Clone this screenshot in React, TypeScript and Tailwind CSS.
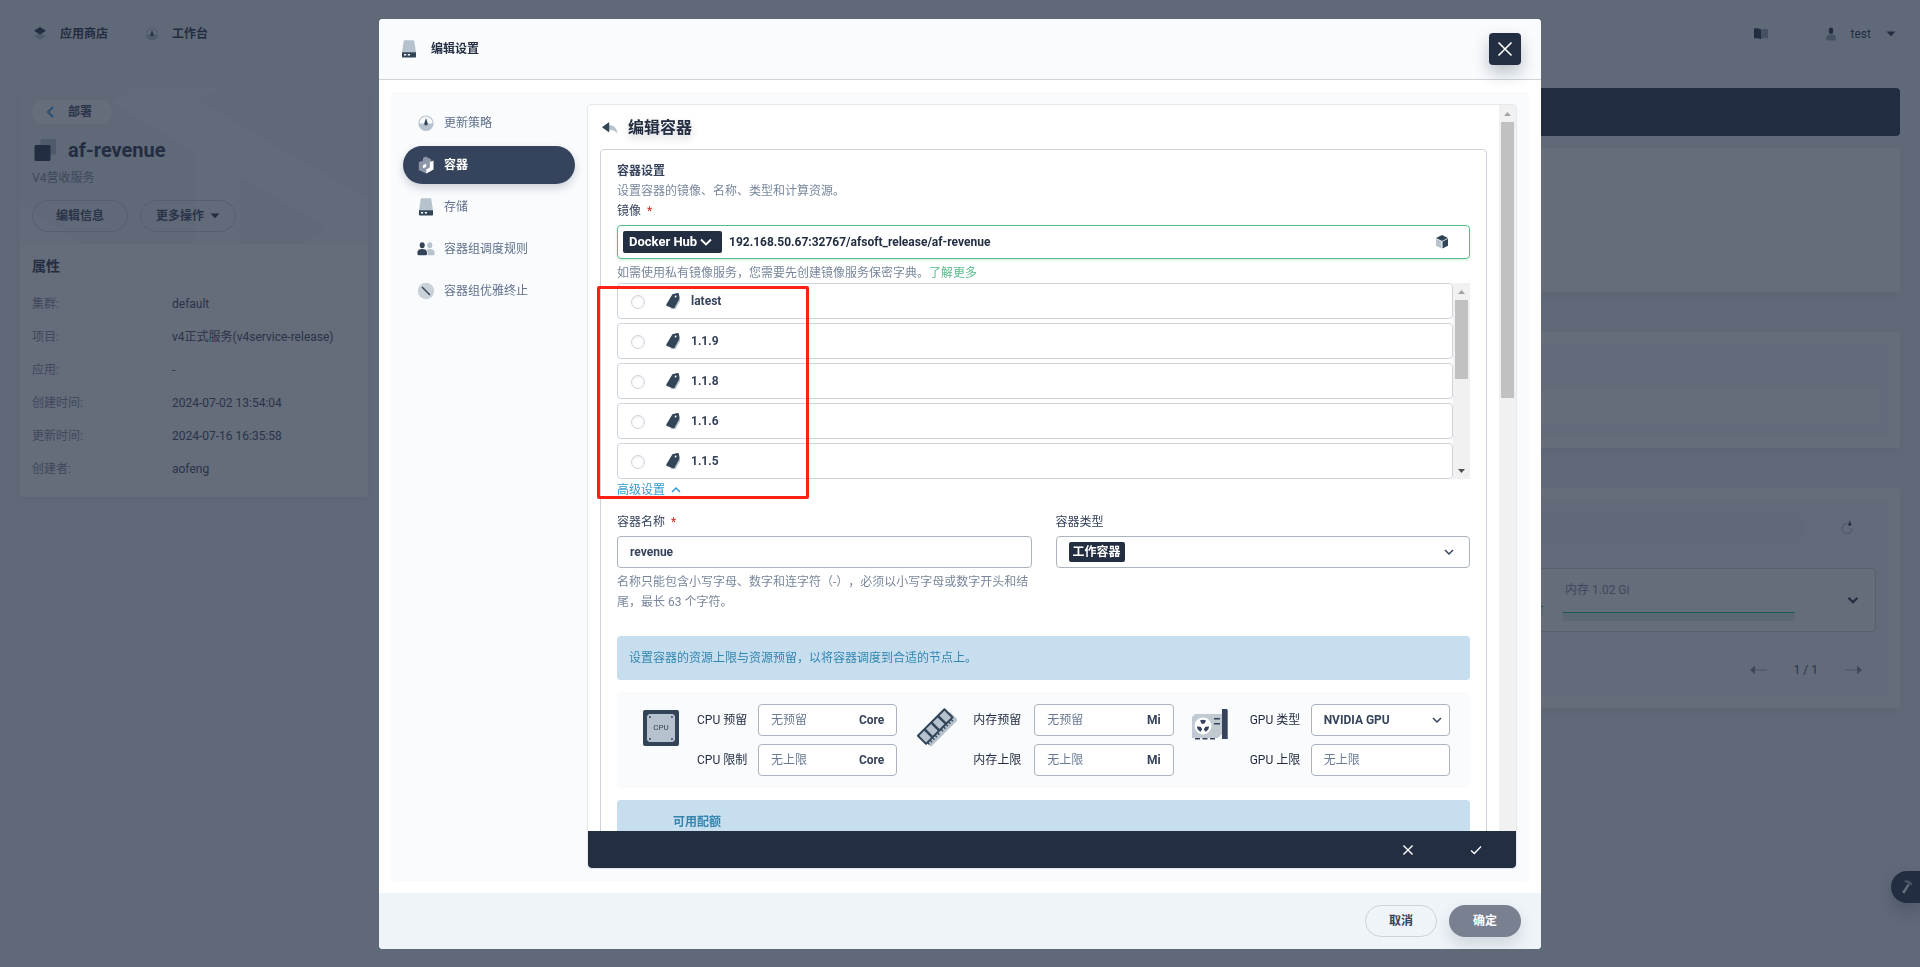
import React from 'react';

const DARK = '#324558';
const LIGHT = '#b6c2cd';

type IconProps = { size?: number; dark?: string; light?: string };

function StorageIcon({ size = 20, dark = DARK, light = LIGHT }: IconProps) {
  return (
    <svg width={size} height={size} viewBox="0 0 20 20" fill="none">
      <path d="M5.600 1.200h8.800c.5 0 .8.3.9.8L17 13.400H3L4.700 2c.1-.5.4-.8.9-.8z" fill={light} />
      <path d="M3 13.200h14v4.600c0 .5-.3.8-.8.8H3.800c-.5 0-.8-.3-.8-.8z" fill={dark} />
      <path d="M5 15h2.200v1.400H5zM8.800 15H11v1.400H8.800z" fill="#fff" />
    </svg>
  );
}

function GaugeIcon({ size = 20, dark = DARK, light = LIGHT }: IconProps) {
  return (
    <svg width={size} height={size} viewBox="0 0 20 20" fill="none">
      <circle cx="10" cy="10" r="7" stroke={light} strokeWidth="1.200" />
      <path d="M2.500 10.500h15a7.500 7.500 0 0 1-15 0z" fill={light} />
      <path d="M10 5l1.700 5.200a1.800 1.800 0 1 1-3.400 0z" fill={dark} />
    </svg>
  );
}

function ContainerIcon({ size = 20 }: IconProps) {
  return (
    <svg width={size} height={size} viewBox="0 0 20 20" fill="none">
      <path d="M9.500 1.500L15 4.200v1.500l2 .8v8l-6.800 4L2.800 15V7.200L7 5.400V3z" fill="#8b95a7" />
      <path d="M13.800 7.200l3.700-1.800v9.200l-7.200 4v-4.200l3.500-1.800z" fill="#fff" />
      <path d="M7 10.200l3.200-1.600v3.300L7 13.300z" fill="#fff" />
    </svg>
  );
}

function GroupIcon({ size = 20, dark = DARK, light = LIGHT }: IconProps) {
  return (
    <svg width={size} height={size} viewBox="0 0 20 20" fill="none">
      <ellipse cx="13.800" cy="6.200" rx="2.500" ry="3" fill={light} />
      <path d="M11.500 16.200v-2.800c0-1.500-.4-2.300-1-2.700.9-.5 2-.7 3.300-.7 2.800 0 4.800 1.100 4.800 3.600v1.500c0 .8-.5 1.100-1.200 1.100z" fill={light} />
      <ellipse cx="6.200" cy="6.200" rx="2.500" ry="3" fill={dark} />
      <path d="M1.400 15.100v-1.500C1.400 11.100 3.400 10 6.200 10s4.800 1.100 4.800 3.600v1.500c0 .8-.5 1.100-1.200 1.100H2.600c-.7 0-1.200-.3-1.200-1.100z" fill={dark} />
    </svg>
  );
}

function StopIcon({ size = 20, dark = DARK }: IconProps) {
  return (
    <svg width={size} height={size} viewBox="0 0 20 20" fill="none">
      <circle cx="10" cy="10" r="8.200" fill="#c9d1d9" />
      <path d="M6 6l8 8" stroke={dark} strokeWidth="1.500" />
    </svg>
  );
}

function TagIcon() {
  return (
    <svg width="20" height="20" viewBox="0 0 20 20" fill="none">
      <path d="M11 3l5.600 1.400.4 5.600-4.700 8.200-5-.4z" fill={LIGHT} />
      <path d="M9.400 3.200L14.200 2c1-.2 1.600.2 1.700 1l.5 4.700-4.700 8.800c-.4.800-1 1-1.800.7L4 15c-.8-.4-1-1-.6-1.800z" fill={DARK} />
      <circle cx="12.600" cy="5.400" r="1" fill="#fff" />
    </svg>
  );
}

function CubeIcon() {
  return (
    <svg width="16" height="16" viewBox="0 0 16 16" fill="none">
      <path d="M8 1l6 3-6 3-6-3z" fill={DARK} />
      <path d="M2 4.700l5.500 2.900v7L2 11.800z" fill={LIGHT} />
      <path d="M14 4.700L8.500 7.600v7L14 11.800z" fill={DARK} />
    </svg>
  );
}

function BackIcon() {
  return (
    <svg width="20" height="20" viewBox="0 0 20 20" fill="none">
      <path d="M9 7c4.800.2 8 2.800 8.400 8.600C15.600 12.800 13 11.800 9 11.900z" fill={LIGHT} />
      <path d="M2 9.300l7.200-5.300v10.600z" fill={DARK} />
    </svg>
  );
}

function Chevron({ dir = 'down', size = 16, color = 'currentColor', width = 1.5 }: { dir?: 'down' | 'up' | 'left'; size?: number; color?: string; width?: number }) {
  const paths = { down: 'M4 6l4 4 4-4', up: 'M4 10l4-4 4 4', left: 'M11 3L6 8l5 5' };
  return (
    <svg width={size} height={size} viewBox="0 0 16 16" fill="none" className="pointer-events-none shrink-0">
      <path d={paths[dir]} stroke={color} strokeWidth={width} />
    </svg>
  );
}

function Caret() {
  return (
    <svg width="10" height="6" viewBox="0 0 10 6">
      <path d="M.5.5h9L5 5.200z" fill="#242e42" />
    </svg>
  );
}

function CrossIcon({ size = 20, width = 2 }: { size?: number; width?: number }) {
  return (
    <svg width={size} height={size} viewBox="0 0 20 20" fill="none">
      <path d="M3.500 3.500l13 13M16.500 3.500l-13 13" stroke="#fff" strokeWidth={width} />
    </svg>
  );
}

function CpuIcon() {
  return (
    <svg width="40" height="40" viewBox="0 0 40 40" fill="none" className="ml-1">
      <rect x="2" y="2" width="36" height="36" rx="2" fill={DARK} />
      <path d="M8 6h24l2 2v24l-2 2H8l-2-2V8z" fill={LIGHT} />
      <circle cx="9" cy="9" r="1" fill={DARK} />
      <circle cx="31" cy="9" r="1" fill={DARK} />
      <circle cx="9" cy="31" r="1" fill={DARK} />
      <circle cx="31" cy="31" r="1" fill={DARK} />
      <text x="20" y="22" fontSize="8" fill={DARK} textAnchor="middle" fontFamily="Roboto, sans-serif">CPU</text>
    </svg>
  );
}

function MemoryIcon() {
  return (
    <svg width="40" height="40" viewBox="0 0 40 40" fill="none" className="ml-1">
      <g transform="rotate(-45 20 20)">
        <path d="M2.500 18h38v11h-38z" fill={LIGHT} />
        <rect x="0" y="11" width="39.500" height="13.500" rx="1" fill={DARK} />
        <path d="M2 13h7v9.500H2zM11.500 13h7v9.500h-7zM21 13h7v9.500h-7zM30.500 13h7v9.500h-7z" fill={LIGHT} />
        <path d="M3 24v2.500M6.500 24v2.500M10 24v2.500M13.500 24v2.500M17 24v2.500M22 24v2.500M25.500 24v2.500M29 24v2.500M32.500 24v2.500M36 24v2.500" stroke={DARK} strokeWidth="1.400" />
      </g>
    </svg>
  );
}

function GpuIcon() {
  return (
    <svg width="40" height="40" viewBox="0 0 40 40" fill="none">
      <path d="M5 6h27v20l-4 4H2V9z" fill="#c1c9d1" />
      <path d="M32 1h4c1 0 1.700.7 1.700 1.700V31H32z" fill="#36435c" />
      <circle cx="13" cy="18" r="8.500" fill="#fff" />
      <g fill="#36435c">
        <path d="M10 12.600c1.800-1.200 4.200-1.200 6 0l-1.600 3.200h-2.800z" />
        <path d="M7 18.500l3.700.2 1.500 2.500-1.600 2.600C8.300 22.700 7 20.800 7 18.500z" />
        <path d="M19 18.500l-3.700.2-1.500 2.500 1.600 2.600c2.300-1.100 3.600-3 3.600-5.300z" />
        <path d="M24 10h6v1.600h-6zM24 15h6v1.600h-6zM5 30h5v1.500H5zM12.500 30h5v1.500h-5zM20 30h5v1.500h-5z" />
      </g>
    </svg>
  );
}

const ATTRIBUTES = [
  ['集群:', 'default'],
  ['项目:', 'v4正式服务(v4service-release)'],
  ['应用:', '-'],
  ['创建时间:', '2024-07-02 13:54:04'],
  ['更新时间:', '2024-07-16 16:35:58'],
  ['创建者:', 'aofeng'],
];

function TopBar() {
  return (
    <header className="flex h-[68px] items-center justify-between pr-6 pl-[30px] text-[#242e42]">
      <nav className="flex items-center gap-9 font-bold">
        <a href="#store" className="flex items-center gap-2.5">
          <svg width="20" height="20" viewBox="0 0 20 20">
            <path d="M10 9l6 3.200-6 3.600-6-3.600z" fill={LIGHT} />
            <path d="M10 3l6 3.800-6 3.600-6-3.600z" fill="#242e42" />
          </svg>
          应用商店
        </a>
        <a href="#workbench" className="flex items-center gap-3">
          <GaugeIcon size={16} dark="#242e42" />
          工作台
        </a>
      </nav>
      <div className="flex items-center">
        <svg width="16" height="16" viewBox="0 0 16 16" className="mr-[54px]">
          <path d="M8 3.500c2-1 4-1 7 0v9c-3-.6-5-.6-7 .3z" fill="#98a5b3" />
          <path d="M1 2.500c3-.4 5-.2 7 1v9.800c-2-1-4-1.300-7-1z" fill="#242e42" />
        </svg>
        <button type="button" className="flex items-center">
          <svg width="16" height="16" viewBox="0 0 16 16">
            <path d="M3 13c0-3 1-4.500 5-4.500s5 1.500 5 4.500c0 1-.5 1.500-1.500 1.500h-7C3.500 14.500 3 14 3 13z" fill="#98a5b3" />
            <rect x="5.800" y="1.500" width="4.400" height="6.500" rx="2.200" fill="#242e42" />
          </svg>
          <span className="mr-[15px] ml-3">test</span>
          <Caret />
        </button>
      </div>
    </header>
  );
}

function DetailCard() {
  return (
    <aside className="w-[348px] shrink-0 overflow-hidden rounded bg-white shadow-[0_4px_8px_rgba(36,46,66,0.06)]">
      <div className="relative h-[156px] bg-[#eff4f9] px-3 pt-3">
        <svg className="absolute inset-0 size-full" viewBox="0 0 348 156" preserveAspectRatio="none" fill="#f9f9fc">
          <path d="M92 15l21-15h87l-23 12 171 100v44h-65l24-17-87-50v67h-45V64z" />
          <path d="M0 115l63 41H0z" />
        </svg>
        <div className="relative">
          <a href="#deployments" className="flex h-6 w-20 items-center rounded-full bg-white pl-2.5 font-bold text-[#36435c]">
            <Chevron dir="left" color="#329dce" width={2} />
            <span className="pl-2.5">部署</span>
          </a>
          <h1 className="mt-2.5 flex h-8 items-center gap-3 text-xl font-bold text-[#242e42]">
            <svg width="24" height="24" viewBox="0 0 24 24">
              <rect x="8.500" y="1" width="15.500" height="15.500" rx="1" fill={LIGHT} />
              <rect x="2.500" y="7" width="16" height="16" rx="1.500" fill="#242e42" />
            </svg>
            af-revenue
          </h1>
          <p className="mt-0.5 text-[#79879c]">V4营收服务</p>
          <div className="mt-3 flex gap-3 font-bold text-[#36435c]">
            <button type="button" className="h-8 w-24 rounded-full border border-[#ccd3db]">编辑信息</button>
            <button type="button" className="flex h-8 w-24 items-center justify-center gap-1.5 rounded-full border border-[#ccd3db]">
              更多操作
              <Caret />
            </button>
          </div>
        </div>
      </div>
      <div className="px-3 pt-3 pb-[18px]">
        <h2 className="text-sm leading-5 font-bold text-[#242e42]">属性</h2>
        <dl className="mt-[18px] flex flex-col gap-[13px]">
          {ATTRIBUTES.map(([name, value]) => (
            <div key={name} className="flex">
              <dt className="w-[140px] text-[#79879c]">{name}</dt>
              <dd className="text-[#36435c]">{value}</dd>
            </div>
          ))}
        </dl>
      </div>
    </aside>
  );
}

const CARD = 'rounded bg-white p-3 shadow-[0_4px_8px_rgba(36,46,66,0.06)]';

function Workloads() {
  return (
    <main className="min-w-0 flex-1">
      <div className="h-12 rounded bg-[#242e42]" />
      <div className={`mt-3 h-36 ${CARD}`} />
      <div className={`mt-10 h-[116px] ${CARD}`}>
        <div className="h-[92px] bg-[#f9fbfd] px-2 pt-11">
          <div className="h-9 bg-white" />
        </div>
      </div>
      <div className={`mt-10 h-[220px] ${CARD}`}>
        <div className="h-[196px] bg-[#f9fbfd] p-3">
          <div className="flex items-center justify-end gap-8 pr-5">
            <div className="h-8 flex-1 rounded-full bg-[#eff4f9]" />
            <button type="button" aria-label="refresh">
              <svg width="18" height="18" viewBox="0 0 18 18" fill="none">
                <path d="M9.500 4.500a5 5 0 1 0 4.500 4.500" stroke={LIGHT} strokeWidth="1.200" />
                <path d="M9.800 6.500l2-5 1.800 5z" fill="#242e42" />
              </svg>
            </button>
          </div>
          <div className="mt-6 flex h-16 items-center justify-end rounded border border-[#ccd3db] bg-white pr-[13px]">
            <div className="mt-5 mr-5 h-[9px] w-[232px] border-t border-[#00c985] bg-[#e2eee9]" />
            <div className="mr-[49px] w-[232px]">
              <p className="pl-0.5 text-[#79879c]">内存 1.02 Gi</p>
              <div className="mt-3 h-[9px] border-t border-[#00c985] bg-[#e2eee9]" />
            </div>
            <Chevron size={18} color="#242e42" width={2} />
          </div>
          <div className="mt-7 flex items-center justify-end gap-[27px] pr-3.5">
            <svg width="17" height="10" viewBox="0 0 17 10"><path d="M5 4h12v2H5z" fill="#ccd3db" /><path d="M0 5l5-4.500v9z" fill="#79879c" /></svg>
            <span className="text-[#36435c]">1 / 1</span>
            <svg width="17" height="10" viewBox="0 0 17 10"><path d="M0 4h12v2H0z" fill="#ccd3db" /><path d="M17 5l-5-4.500v9z" fill="#79879c" /></svg>
          </div>
        </div>
      </div>
    </main>
  );
}

const MENU = [
  { label: '更新策略', icon: GaugeIcon },
  { label: '容器', icon: ContainerIcon, active: true },
  { label: '存储', icon: StorageIcon },
  { label: '容器组调度规则', icon: GroupIcon },
  { label: '容器组优雅终止', icon: StopIcon },
];

function SideMenu() {
  return (
    <nav className="flex w-[172px] shrink-0 flex-col gap-1">
      {MENU.map(({ label, icon: Icon, active }) => (
        <a
          key={label}
          href="#menu"
          className={
            active
              ? 'flex h-[38px] items-center gap-2 rounded-full bg-[#36435c] pl-[13px] font-bold text-white shadow-[0_4px_8px_rgba(36,46,66,0.2)]'
              : 'flex h-[38px] items-center gap-2 pl-[13px] text-[#5f708a]'
          }
        >
          <Icon />
          {label}
        </a>
      ))}
    </nav>
  );
}

function ScrollBar({ thumb, down }: { thumb: string; down?: boolean }) {
  return (
    <div className="flex w-[17px] shrink-0 flex-col items-center bg-[#f1f1f1]" aria-hidden="true">
      <div className="flex h-[17px] shrink-0 items-center">
        <svg width="7" height="4" viewBox="0 0 7 4"><path d="M0 4l3.500-4L7 4z" fill="#a3a3a3" /></svg>
      </div>
      <div className={`w-[13px] shrink-0 bg-[#c1c1c1] ${thumb}`} />
      {down && (
        <div className="mt-auto flex h-[17px] items-center">
          <svg width="7" height="4" viewBox="0 0 7 4"><path d="M0 0l3.500 4L7 0z" fill="#505050" /></svg>
        </div>
      )}
    </div>
  );
}

const TAGS = ['latest', '1.1.9', '1.1.8', '1.1.6', '1.1.5'];

function ImagePicker() {
  return (
    <div className="relative">
      <div className="flex h-[196px] overflow-hidden">
        <div className="flex flex-1 flex-col gap-1">
          {TAGS.map((tag) => (
            <label key={tag} className="flex h-9 shrink-0 items-center rounded border border-[#ccd3db] pl-[13px] font-bold text-[#36435c]">
              <input type="radio" name="tag" className="mt-0.5 size-3.5 appearance-none rounded-full border border-[#ccd3db] bg-white shadow-[inset_0_1px_2px_rgba(36,46,66,0.1)]" />
              <span className="mr-2 ml-[18px]"><TagIcon /></span>
              {tag}
            </label>
          ))}
        </div>
        <ScrollBar thumb="h-[79px]" down />
      </div>
      <button type="button" className="mt-px flex h-5 items-center gap-[3px] text-[#329dce]">
        高级设置
        <Chevron dir="up" />
      </button>
      <div className="pointer-events-none absolute top-[3px] -left-5 h-[213px] w-[212px] rounded-xs border-[3px] border-[#ff2015]" />
    </div>
  );
}

function ResourceField({ label, placeholder, unit }: { label: string; placeholder: string; unit?: string }) {
  return (
    <label className="flex items-center">
      <span className="w-[61px] shrink-0 text-[#242e42]">{label}</span>
      <span className="flex h-8 min-w-0 flex-1 items-center rounded border border-[#abb4be] bg-white px-3">
        <input className="w-full min-w-0 flex-1 outline-none placeholder:text-[#6b7b95]" placeholder={placeholder} />
        {unit && <span className="font-bold text-[#36435c]">{unit}</span>}
      </span>
    </label>
  );
}

function ResourceGroup({ icon, children }: { icon: React.ReactNode; children: React.ReactNode }) {
  return (
    <div className="flex">
      <div className="w-[60px] shrink-0 pt-1">{icon}</div>
      <div className="flex min-w-0 flex-1 flex-col gap-2">{children}</div>
    </div>
  );
}

function ContainerForm() {
  return (
    <div className="flex-1 px-3 pt-3">
      <div className="flex h-[22px] items-center gap-2">
        <button type="button" aria-label="back"><BackIcon /></button>
        <h3 className="text-base leading-[22px] font-bold text-[#242e42] [text-shadow:0_4px_8px_rgba(36,46,66,0.2)]">编辑容器</h3>
      </div>
      <div className="mt-2.5 h-[800px] rounded border border-[#ccd3db] px-4 pt-[11px]">
        <h4 className="font-bold text-[#36435c]">容器设置</h4>
        <p className="text-[#79879c]">设置容器的镜像、名称、类型和计算资源。</p>
        <label htmlFor="image" className="block text-[#36435c]">镜像 <span className="pl-[3px] text-[#ca2621]">*</span></label>
        <div className="mt-1 flex h-[34px] items-center rounded border border-[#55bc8a] pr-[19px] pl-[5px] shadow-[0_1px_3px_rgba(85,188,138,0.3)]">
          <div className="relative flex items-center">
            <select aria-label="registry" className="h-[22px] w-[99px] appearance-none rounded-xs bg-[#242e42] pl-1.5 text-[13px] font-bold text-white">
              <option>Docker Hub</option>
            </select>
            <span className="pointer-events-none absolute right-1.5"><Chevron size={20} color="#fff" /></span>
          </div>
          <input id="image" className="ml-[7px] flex-1 font-bold text-[#242e42] outline-none" defaultValue="192.168.50.67:32767/afsoft_release/af-revenue" />
          <CubeIcon />
        </div>
        <p className="mt-1 text-[#79879c]">
          如需使用私有镜像服务，您需要先创建镜像服务保密字典。<a href="#more" className="text-[#55bc8a]">了解更多</a>
        </p>
        <ImagePicker />
        <div className="mt-3 grid grid-cols-2 gap-6">
          <div>
            <label htmlFor="name" className="block text-[#36435c]">容器名称 <span className="pl-[3px] text-[#ca2621]">*</span></label>
            <input id="name" className="mt-1 h-8 w-full rounded border border-[#abb4be] px-3 font-bold text-[#36435c] outline-none" defaultValue="revenue" />
            <p className="mt-1 text-[#79879c] [text-spacing-trim:space-all]">名称只能包含小写字母、数字和连字符（-），必须以小写字母或数字开头和结尾，最长 63 个字符。</p>
          </div>
          <div>
            <label htmlFor="type" className="block text-[#36435c]">容器类型</label>
            <div className="mt-1 flex h-8 items-center justify-between rounded border border-[#abb4be] px-3 text-[#36435c]">
              <select id="type" className="h-5 w-14 appearance-none rounded-xs bg-[#242e42] px-1 font-bold text-white">
                <option>工作容器</option>
              </select>
              <Chevron />
            </div>
          </div>
        </div>
        <div className="mt-6 rounded bg-[#c7deef] p-3 text-[#3385b0]">设置容器的资源上限与资源预留，以将容器调度到合适的节点上。</div>
        <div className="mt-3 grid grid-cols-3 gap-4 rounded bg-[#f9fbfd] px-5 py-3">
          <ResourceGroup icon={<CpuIcon />}>
            <ResourceField label="CPU 预留" placeholder="无预留" unit="Core" />
            <ResourceField label="CPU 限制" placeholder="无上限" unit="Core" />
          </ResourceGroup>
          <ResourceGroup icon={<MemoryIcon />}>
            <ResourceField label="内存预留" placeholder="无预留" unit="Mi" />
            <ResourceField label="内存上限" placeholder="无上限" unit="Mi" />
          </ResourceGroup>
          <ResourceGroup icon={<GpuIcon />}>
            <label className="flex items-center">
              <span className="w-[61px] shrink-0 text-[#242e42]">GPU 类型</span>
              <span className="relative flex min-w-0 flex-1 items-center text-[#36435c]">
                <select className="h-8 w-full appearance-none rounded border border-[#abb4be] bg-white px-3 font-bold">
                  <option>NVIDIA GPU</option>
                </select>
                <span className="pointer-events-none absolute right-[5px]"><Chevron /></span>
              </span>
            </label>
            <ResourceField label="GPU 上限" placeholder="无上限" />
          </ResourceGroup>
        </div>
        <div className="mt-3 h-20 rounded bg-[#c7deef] pt-3 pl-14 font-bold text-[#3385b0]">可用配额</div>
      </div>
    </div>
  );
}

function EditDialog() {
  return (
    <div role="dialog" aria-label="编辑设置" className="flex h-full w-full max-w-[1162px] flex-col overflow-hidden rounded bg-white">
      <div className="flex h-[61px] shrink-0 items-center justify-between border-b border-[#ccd3db] bg-[#f9fbfd] px-5">
        <div className="flex items-center gap-3 font-bold text-[#242e42]">
          <StorageIcon />
          <h2>编辑设置</h2>
        </div>
        <button type="button" aria-label="close" className="flex size-8 items-center justify-center rounded bg-[#242e42] shadow-[0_8px_16px_rgba(36,46,66,0.28)]">
          <CrossIcon width={1.6} />
        </button>
      </div>
      <div className="flex min-h-0 flex-1 p-3">
        <div className="flex min-w-0 flex-1 gap-3 rounded bg-[#f9fbfd] p-3">
          <SideMenu />
          <div className="flex min-w-0 flex-1 flex-col overflow-hidden rounded border border-[#e3e9ef] bg-white">
            <div className="flex min-h-0 flex-1 overflow-hidden">
              <ContainerForm />
              <ScrollBar thumb="h-[276px]" />
            </div>
            <div className="flex h-[37px] shrink-0 items-center justify-end gap-12 rounded-b bg-[#242e42] pr-[30px]">
              <button type="button" aria-label="discard" className="flex size-5 items-center justify-center"><CrossIcon size={14} /></button>
              <button type="button" aria-label="confirm" className="flex size-5 items-center justify-center">
                <svg width="14" height="14" viewBox="0 0 14 14" fill="none"><path d="M2 7.500l3.300 3L12 3.500" stroke="#fff" strokeWidth="1.300" /></svg>
              </button>
            </div>
          </div>
        </div>
      </div>
      <div className="flex h-14 shrink-0 items-center justify-end gap-3 bg-[#eff4f9] px-5 font-bold">
        <button type="button" className="h-8 w-[72px] rounded-full border border-[#ccd3db] text-[#36435c]">取消</button>
        <button type="button" className="h-8 w-[72px] rounded-full bg-[#79808f] text-white shadow-[0_8px_16px_rgba(36,46,66,0.15)]">确定</button>
      </div>
    </div>
  );
}

export default function App() {
  return (
    <div className="relative h-screen overflow-hidden bg-[#eff4f9] font-[Roboto,'Noto_Sans_CJK_SC',sans-serif] text-[12px] leading-5">
      <TopBar />
      <div className="mx-auto -mt-px h-px w-4/5 bg-linear-to-r from-transparent via-[#d8dee5] to-transparent" />
      <div className="flex items-start gap-5 px-5 pt-5">
        <DetailCard />
        <Workloads />
      </div>
      <button type="button" aria-label="toolbox" className="absolute right-0 bottom-16 flex h-8 w-[29px] items-center rounded-l-full bg-[#242e42] pl-2 shadow-[0_8px_16px_rgba(36,46,66,0.3)]">
        <svg width="16" height="16" viewBox="0 0 16 16" fill="none">
          <path d="M8.500 5l2 1L5.500 14.500 3 13.400z" fill="#fff" />
          <path d="M4.500 2.200c2.500-1.500 5-1.200 7 .6l2 1.700-1 2-2-.8L8.500 4.200c-1-.8-2.500-1.500-4-2z" fill="#98a5b3" />
        </svg>
      </button>
      <div className="fixed inset-0 flex justify-center bg-[#242e42]/70 pt-[19px] pb-[18px]">
        <EditDialog />
      </div>
    </div>
  );
}
